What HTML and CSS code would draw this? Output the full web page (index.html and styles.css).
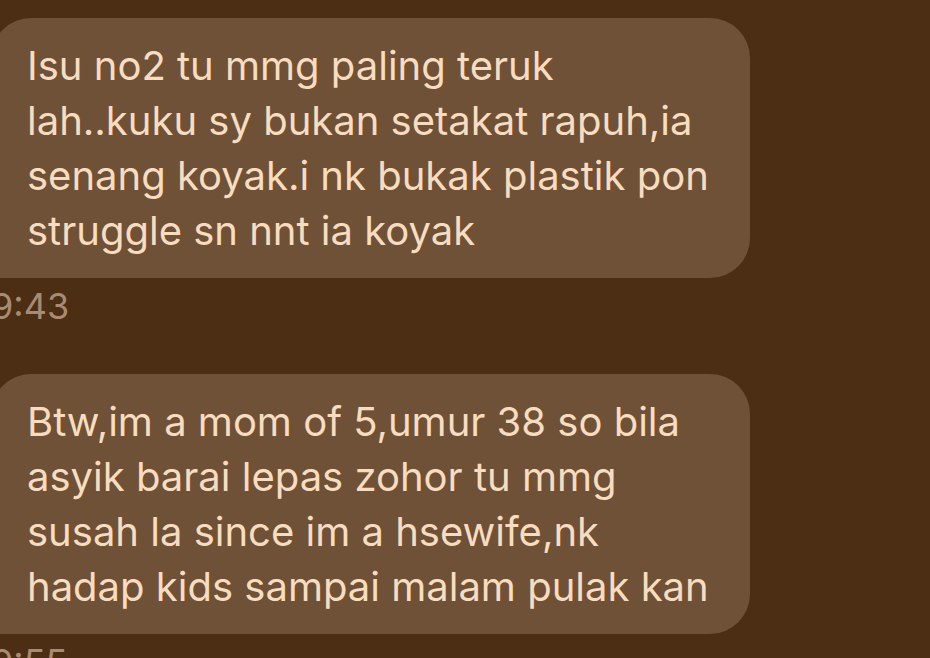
FILE: index.html
```html
<!DOCTYPE html>
<html>
<head>
<meta charset="utf-8">
<link rel="stylesheet" href="styles.css">
</head>
<body>
<div class="thread">
  <div class="msg">
    <div class="bubble">Isu no2 tu mmg paling teruk<br>lah..kuku sy bukan setakat rapuh,ia<br>senang koyak.i nk bukak plastik pon<br>struggle sn nnt ia koyak</div>
    <div class="time">9:43</div>
  </div>
  <div class="msg">
    <div class="bubble">Btw,im a mom of 5,umur 38 so bila<br>asyik barai lepas zohor tu mmg<br>susah la since im a hsewife,nk<br>hadap kids sampai malam pulak kan</div>
    <div class="time">9:55</div>
  </div>
</div>
</body>
</html>
```
FILE: styles.css
```css
html, body {
  margin: 0;
  padding: 0;
  background: #4c2e14;
  overflow: hidden;
  height: 658px;
}
.thread {
  display: flex;
  flex-direction: column;
  gap: 40px;
  padding-top: 18px;
  margin-left: -9px;
  font-family: Inter, "Noto Sans", sans-serif;
}
.msg {
  display: flex;
  flex-direction: column;
}
.bubble {
  width: 759px;
  box-sizing: border-box;
  background: #6e5136;
  color: #f8dcc0;
  border-radius: 40px 40px 40px 0;
  padding: 20px 20px 20px 36px;
  font-size: 40px;
  line-height: 55px;
}
.time {
  color: #a78b72;
  font-size: 36px;
  line-height: 56px;
  margin-top: 0;
}
```
